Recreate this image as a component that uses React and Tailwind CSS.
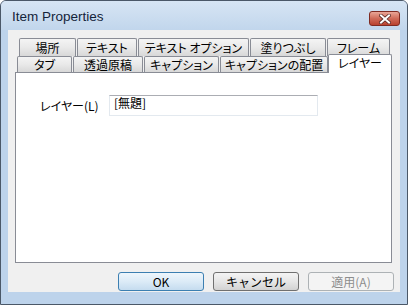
import React from 'react';

const jp = "font-['Noto_Sans_CJK_JP',sans-serif]";

// back-row / unselected tab
const Tab = ({ label, w }) => (
  <div
    className={`${w} h-full flex items-center justify-center border border-b-0 border-[#898c95] rounded-t-[2px] bg-gradient-to-b from-[#f4f4f4] via-[#e9e9e9] to-[#d8d8d8] text-[12px] leading-none text-black [font-feature-settings:'palt'] whitespace-nowrap`}
  >
    {label}
  </div>
);

const Button = ({ children, variant }) => {
  const styles = {
    default:
      'border-[#3c7fb1] bg-gradient-to-b from-[#eef6fc] via-[#dcebf7] to-[#c5dcef] text-black',
    normal:
      'border-[#707070] bg-gradient-to-b from-[#f4f4f4] via-[#e6e6e6] to-[#d2d2d2] text-black',
    disabled: 'border-[#adb2b5] bg-[#f4f4f4] text-[#8d8d8d]',
  };
  return (
    <div
      className={`w-[86px] h-[19px] flex items-center justify-center rounded-[3px] border text-[12px] leading-none ${styles[variant]}`}
    >
      {children}
    </div>
  );
};

function App() {
  return (
    <div className={`w-[409px] h-[306px] bg-white ${jp}`}>
      <div className="w-[408px] h-[305px] flex flex-col border border-[#4b5868] rounded-t-[6px] bg-[#bdd3eb] overflow-hidden">
        {/* title bar */}
        <div className="h-[29px] flex items-start justify-between bg-gradient-to-b from-[#d7e5f4] to-[#c1d6ec]">
          <div className="pl-[11px] pt-[8px] font-['Liberation_Sans',sans-serif] text-[13.5px] leading-[16px] text-[#14243a]">
            Item Properties
          </div>
          <div className="mr-[7px] mt-[10px] w-[31px] h-[15px] flex items-center justify-center rounded-[3px] border border-[#7f2b22] bg-gradient-to-b from-[#e9a697] via-[#cf6b59] to-[#b9412f]">
            <svg width="12" height="10" viewBox="0 0 12 10">
              <path d="M2 1.5 L10 8.5 M10 1.5 L2 8.5" stroke="#5a2a26" strokeWidth="3.6" strokeLinecap="square" />
              <path d="M2 1.5 L10 8.5 M10 1.5 L2 8.5" stroke="#ffffff" strokeWidth="2" strokeLinecap="square" />
            </svg>
          </div>
        </div>

        {/* client area */}
        <div className="mx-[7px] h-[262px] bg-[#f0f0f0] flex flex-col">
          <div className="mt-[8px] ml-[7px] w-[377px]">
            <div className="flex h-[18px] pl-[4px] gap-px">
              <Tab label="場所" w="w-[57px]" />
              <Tab label="テキスト" w="w-[60px]" />
              <Tab label="テキスト オプション" w="w-[111px]" />
              <Tab label="塗りつぶし" w="w-[76px]" />
              <Tab label="フレーム" w="w-[63px]" />
            </div>
            <div className="flex h-[16px] pl-[2px] gap-px items-end">
              <Tab label="タブ" w="w-[55px]" />
              <Tab label="透過原稿" w="w-[70px]" />
              <Tab label="キャプション" w="w-[75px]" />
              <Tab label="キャプションの配置" w="w-[108px]" />
              <div className="relative z-10 top-[1px] -ml-px w-[64px] h-[19px] shrink-0 flex items-end justify-center border border-b-0 border-[#898c95] rounded-t-[2px] bg-white text-[12px] leading-none text-black [font-feature-settings:'palt'] pb-[4px]">
                レイヤー
              </div>
            </div>
            <div className="h-[191px] border border-[#898c95] bg-white">
              <div className="flex items-center pt-[22px] pl-[24px]">
                <div className="w-[69px] text-[12px] leading-none text-black [font-feature-settings:'palt']">
                  レイヤー(L)
                </div>
                <div className="w-[209px] h-[21px] border border-[#e3e9ef] border-t-[#abadb3] bg-white pl-[4px] text-[12px] leading-[14px] text-black">
                  [無題]
                </div>
              </div>
            </div>
          </div>

          <div className="mt-[9px] flex justify-end gap-[9px] pr-[6px]">
            <Button variant="default">OK</Button>
            <Button variant="normal">キャンセル</Button>
            <Button variant="disabled">適用(A)</Button>
          </div>
        </div>
      </div>
    </div>
  );
}

export default App;
